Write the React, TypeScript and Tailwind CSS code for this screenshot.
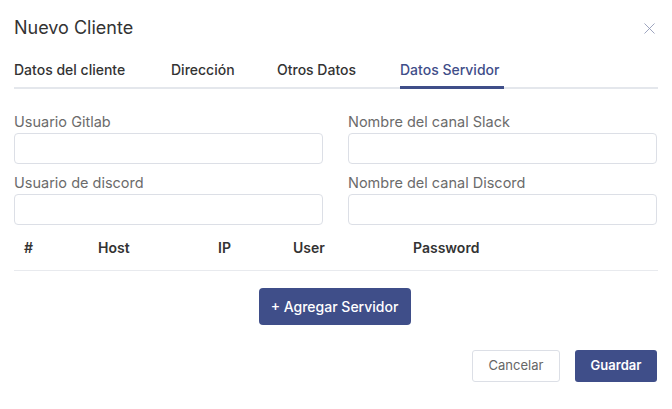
import { X } from "lucide-react";

const tabs = [
  { label: "Datos del cliente", width: "w-[157px]" },
  { label: "Dirección", width: "w-[106px]" },
  { label: "Otros Datos", width: "w-[123px]" },
  { label: "Datos Servidor", width: "w-[104px]" },
];

function Field({ label }: { label: string }) {
  return (
    <div className="flex flex-col">
      <label className="text-[14.5px] leading-[20px] text-[#6b6b6b]">{label}</label>
      <input
        type="text"
        className="mt-[1px] h-[31px] w-full rounded-[4px] border border-[#dcdfe6] bg-white px-3 text-sm outline-none"
      />
    </div>
  );
}

export default function App() {
  return (
    <div
      className="min-h-[409px] w-[672px] bg-white px-[14px] text-[#333]"
      style={{ fontFamily: "Inter, 'Noto Sans', sans-serif" }}
    >
      <div className="flex items-center justify-between pt-[14px]">
        <h2 className="text-[18px] leading-[28px] font-normal text-[#333]">Nuevo Cliente</h2>
        <button className="-mr-[1px] text-[#8f97b5]" aria-label="Cerrar">
          <X size={19} strokeWidth={1.1} />
        </button>
      </div>

      <div className="mt-[18px] flex border-b-2 border-[#e4e7ec]">
        {tabs.map((tab, i) => {
          const active = i === tabs.length - 1;
          return (
            <button
              key={tab.label}
              className={`-mb-[2px] border-b-[3px] pb-[6px] text-left text-[14px] leading-[20px] font-medium ${tab.width} ${
                active ? "border-[#3f4e89] text-[#3f4e89]" : "border-transparent text-[#333]"
              }`}
            >
              {tab.label}
            </button>
          );
        })}
      </div>

      <div className="mr-[1px] mt-[23px] grid grid-cols-2 gap-x-[25px] gap-y-[9px]">
        <Field label="Usuario Gitlab" />
        <Field label="Nombre del canal Slack" />
        <Field label="Usuario de discord" />
        <Field label="Nombre del canal Discord" />
      </div>

      <div className="mt-[1px] grid grid-cols-[74px_120px_75px_120px_1fr] border-b border-[#e8eaee] px-[10px] py-[11px] text-[14px] leading-[22px] font-semibold text-[#333]">
        <span>#</span>
        <span>Host</span>
        <span>IP</span>
        <span>User</span>
        <span>Password</span>
      </div>

      <div className="mt-[17px] flex justify-center pr-[3px]">
        <button className="h-[37px] w-[152px] rounded-[4px] bg-[#3f4e89] text-[14px] font-medium text-white">
          + Agregar Servidor
        </button>
      </div>

      <div className="mt-[25px] flex justify-end gap-[15px] pr-[1px]">
        <button className="h-[32px] w-[88px] rounded-[3px] border border-[#dcdfe6] bg-white text-[13px] text-[#666]">
          Cancelar
        </button>
        <button className="h-[32px] w-[82px] rounded-[3px] bg-[#3f4e89] text-[13px] font-semibold text-white">
          Guardar
        </button>
      </div>
    </div>
  );
}
